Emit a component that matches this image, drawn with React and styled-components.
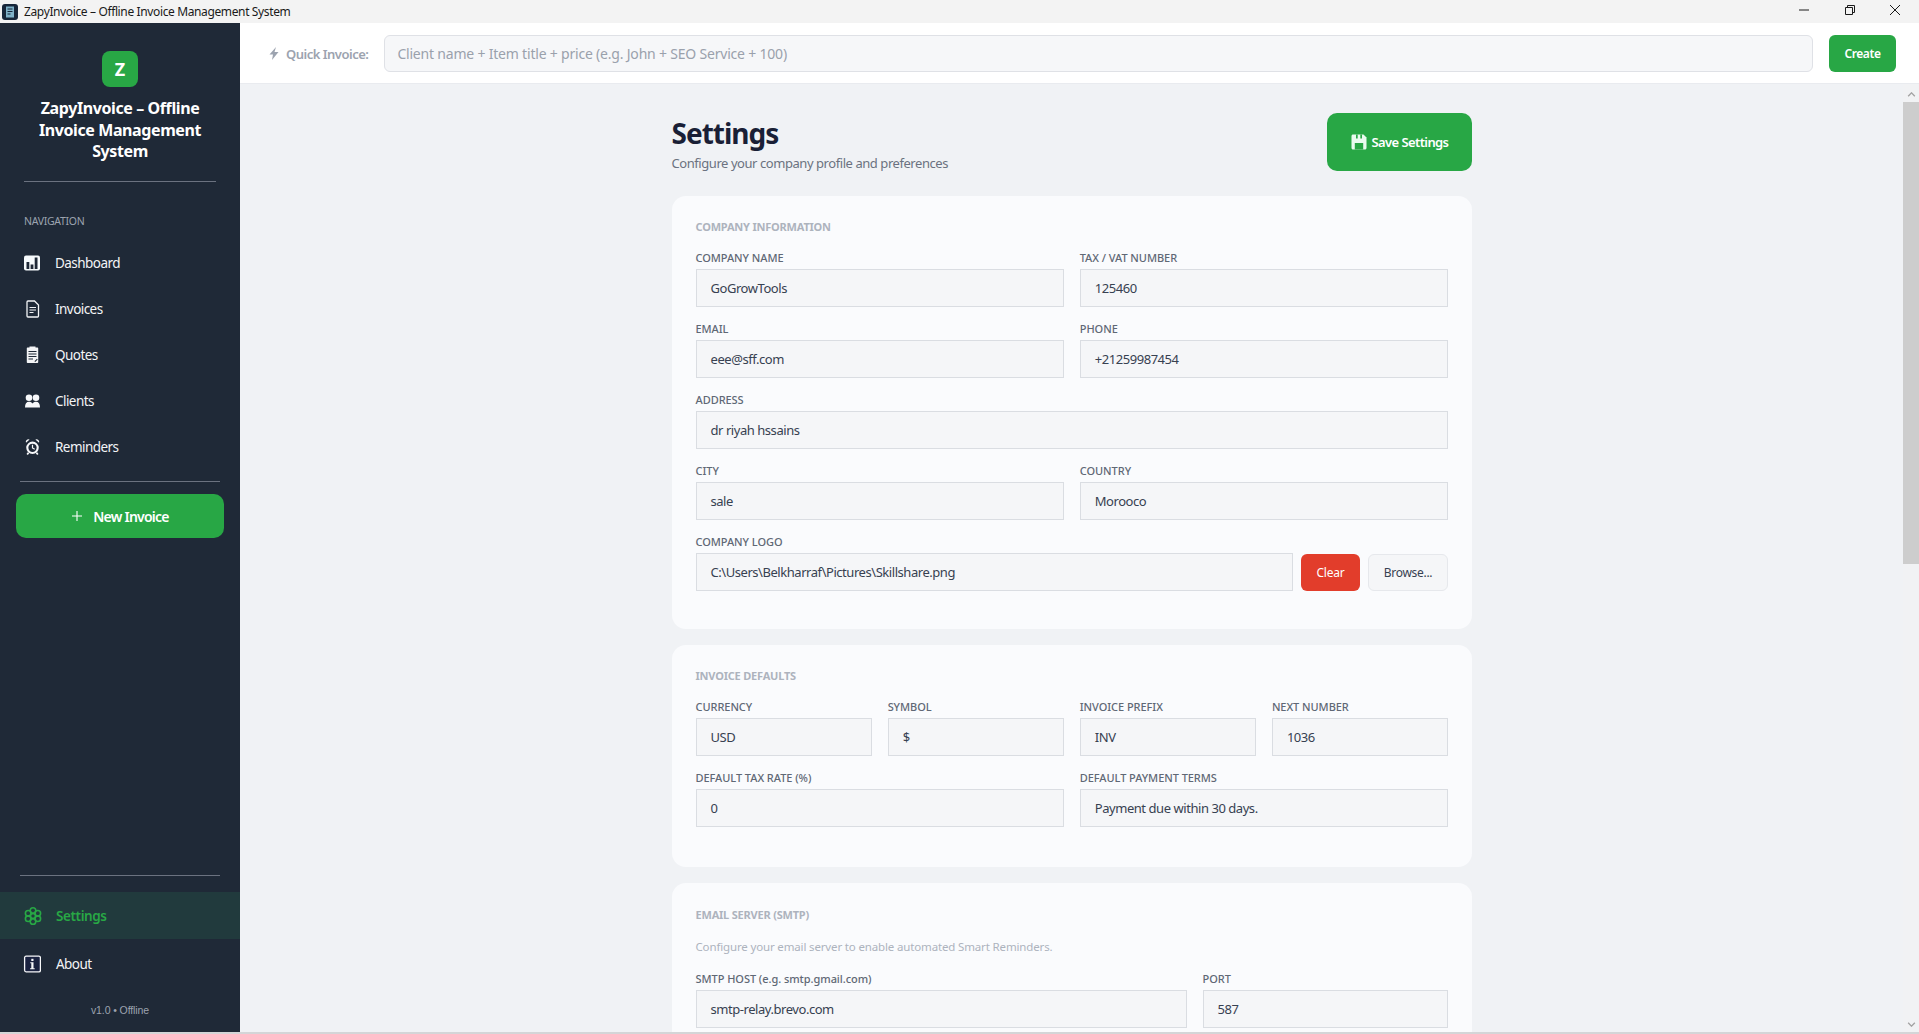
import React from "react";
import styled, { createGlobalStyle } from "styled-components";

const GlobalStyle = createGlobalStyle`
  html, body {
    margin: 0;
    padding: 0;
    height: 100%;
    overflow: hidden;
    background: #f0f2f5;
    font-family: "Noto Sans", "Open Sans", "Liberation Sans", sans-serif;
  }
  * { box-sizing: border-box; }
`;

const Win = styled.div`
  width: 1919px;
  height: 1034px;
  display: flex;
  flex-direction: column;
  overflow: hidden;
  border-bottom: 2px solid #d4d5d7;
`;

// window title bar
const TitleBar = styled.div`
  height: 23px;
  flex-shrink: 0;
  background: #f3f3f3;
  display: flex;
  align-items: center;
  padding-left: 2px;
  font-size: 12px;
  letter-spacing: -0.37px;
  color: #1a1a1a;
`;

const AppGlyph = styled.svg`
  width: 16px;
  height: 16px;
  margin-right: 6px;
  flex-shrink: 0;
`;

const WinControls = styled.div`
  margin-left: auto;
  display: flex;
  align-items: center;
  height: 100%;
  padding: 0 1px 3px 0;
`;

const WinBtn = styled.div`
  width: 45.5px;
  height: 100%;
  display: flex;
  align-items: center;
  justify-content: center;
  svg {
    width: 12px;
    height: 12px;
    stroke: #1a1a1a;
    fill: none;
    stroke-width: 1;
  }
`;

const Body = styled.div`
  flex: 1;
  display: flex;
  min-height: 0;
`;

const Sidebar = styled.aside`
  width: 240px;
  flex-shrink: 0;
  background: #1f2937;
  display: flex;
  flex-direction: column;
`;

const Brand = styled.div`
  display: flex;
  flex-direction: column;
  align-items: center;
  padding-top: 28px;
  margin: 0 24px;
  height: 159px;
  flex-shrink: 0;
  border-bottom: 1px solid #6b7280;
`;

const LogoMark = styled.div`
  width: 36px;
  height: 36px;
  flex-shrink: 0;
  border-radius: 8px;
  background: #28a745;
  color: #fff;
  display: flex;
  align-items: center;
  justify-content: center;
  font-size: 18px;
  font-weight: 700;
`;

const BrandName = styled.div`
  margin-top: 11px;
  width: 192px;
  text-align: center;
  color: #fff;
  font-size: 16px;
  font-weight: 700;
  line-height: 21.7px;
  letter-spacing: -0.4px;
`;

const NavCaption = styled.div`
  margin: 32px 0 0 24px;
  height: 15px;
  line-height: 15px;
  font-size: 10.5px;
  letter-spacing: -0.3px;
  color: #9ca3af;
`;

const NavList = styled.nav`
  margin-top: 11px;
  display: flex;
  flex-direction: column;
`;

const NavItem = styled.div`
  height: ${(p) => p.$h || 46}px;
  display: flex;
  align-items: center;
  gap: ${(p) => p.$gap || 14}px;
  padding-left: ${(p) => (p.$active ? 24 : 23)}px;
  font-size: 13.5px;
  font-weight: ${(p) => (p.$active ? 600 : 400)};
  letter-spacing: ${(p) => (p.$active ? "-0.4px" : "-0.55px")};
  color: ${(p) => (p.$active ? "#28a745" : "#f3f4f6")};
  background: ${(p) => (p.$active ? "#213a3d" : "transparent")};
  svg {
    width: 18px;
    height: 18px;
    flex-shrink: 0;
  }
`;

const SideRule = styled.div`
  margin: ${(p) => p.$m || "0"};
  height: 1px;
  flex-shrink: 0;
  background: #6b7280;
`;

const NewInvoice = styled.button`
  margin: 12px 16px 0;
  height: 44px;
  flex-shrink: 0;
  border: none;
  border-radius: 10px;
  background: #28a745;
  color: #fff;
  display: flex;
  align-items: center;
  justify-content: center;
  gap: 10px;
  font: 600 14px "Noto Sans", sans-serif;
  letter-spacing: -0.75px;
  svg {
    width: 12px;
    height: 12px;
  }
`;

const SideBottom = styled.div`
  margin-top: auto;
  display: flex;
  flex-direction: column;
`;

const Version = styled.div`
  height: 43px;
  line-height: 43px;
  text-align: center;
  font-size: 10.5px;
  letter-spacing: -0.1px;
  color: #9ca3af;
  font-family: "Liberation Sans", sans-serif;
`;

const Main = styled.main`
  flex: 1;
  min-width: 0;
  display: flex;
  flex-direction: column;
`;

const QuickBar = styled.div`
  height: 61px;
  flex-shrink: 0;
  background: #fff;
  border-bottom: 1px solid #e9ebef;
  display: flex;
  align-items: center;
  padding: 1px 23px 0 29px;
`;

const QuickLabel = styled.div`
  display: flex;
  align-items: center;
  gap: 7px;
  font-size: 13px;
  font-weight: 600;
  letter-spacing: -0.5px;
  color: #9ca3af;
  white-space: nowrap;
  svg {
    width: 10px;
    height: 13px;
    fill: #9ca3af;
  }
`;

const QuickInput = styled.div`
  flex: 1;
  height: 37px;
  margin: 0 16px;
  padding-left: 12px;
  display: flex;
  align-items: center;
  border: 1px solid #dfe1e6;
  border-radius: 6px;
  background: #f6f7f9;
  font-size: 14px;
  letter-spacing: -0.2px;
  color: #9aa1ac;
`;

const CreateBtn = styled.button`
  width: 67px;
  height: 37px;
  border: none;
  border-radius: 6px;
  background: #28a745;
  color: #fff;
  font: 600 12px "Noto Sans", sans-serif;
  letter-spacing: -0.4px;
`;

const ScrollRow = styled.div`
  flex: 1;
  min-height: 0;
  display: flex;
`;

const Content = styled.div`
  flex: 1;
  min-width: 0;
  overflow: hidden;
  padding: 29px 0 0 431.5px;
`;

const Column = styled.div`
  width: 800.5px;
  display: flex;
  flex-direction: column;
  gap: 16px;
`;

const PageHead = styled.div`
  height: 66px;
  flex-shrink: 0;
  margin-top: 1px;
  display: flex;
  justify-content: space-between;
`;

const PageTitle = styled.h1`
  margin: 0;
  font-size: 28px;
  line-height: 38px;
  font-weight: 700;
  letter-spacing: -1px;
  color: #1a1f36;
`;

const PageSub = styled.div`
  margin-top: 2px;
  font-size: 13px;
  letter-spacing: -0.44px;
  color: #6b7280;
`;

const SaveBtn = styled.button`
  width: 145px;
  height: 58px;
  margin-top: -1px;
  border: none;
  border-radius: 10px;
  background: #28a745;
  color: #fff;
  display: flex;
  align-items: center;
  justify-content: center;
  gap: 5px;
  font: 600 13px "Noto Sans", sans-serif;
  letter-spacing: -0.6px;
  svg {
    width: 16px;
    height: 16px;
  }
`;

const Card = styled.section`
  background: #fafbfd;
  border-radius: 14px;
  padding: ${(p) => p.$pt || 24}px 24px 24px;
  height: ${(p) => p.$h}px;
  flex-shrink: 0;
`;

const CardTitle = styled.div`
  height: 14px;
  line-height: 14px;
  font-size: 11px;
  font-weight: 700;
  letter-spacing: -0.2px;
  color: #adb3bd;
  text-transform: uppercase;
  margin-bottom: ${(p) => p.$mb || 16}px;
`;

const CardNote = styled.div`
  height: 16px;
  line-height: 16px;
  font-size: 11.5px;
  letter-spacing: -0.15px;
  color: #adb3bd;
  margin-bottom: 16px;
`;

const Rows = styled.div`
  display: flex;
  flex-direction: column;
  gap: 14px;
`;

const Row = styled.div`
  display: grid;
  grid-template-columns: ${(p) => p.$cols || "1fr 1fr"};
  gap: 16px;
`;

const Field = styled.div`
  min-width: 0;
  display: flex;
  flex-direction: column;
`;

const Label = styled.label`
  height: 15px;
  line-height: 15px;
  margin-bottom: 4px;
  font-size: 11px;
  font-weight: 500;
  letter-spacing: -0.05px;
  color: #5f6875;
`;

const Input = styled.div`
  height: 38px;
  padding-left: 14px;
  display: flex;
  align-items: center;
  background: #f5f6f8;
  border: 1px solid #dadde2;
  font-size: 13px;
  letter-spacing: -0.45px;
  color: #374151;
`;

const LogoRow = styled.div`
  display: flex;
  align-items: center;
  gap: 8px;
`;

const LogoInput = styled(Input)`
  flex: 1;
`;

const ClearBtn = styled.button`
  width: 59px;
  height: 37px;
  border: none;
  border-radius: 6px;
  background: #e23d2b;
  color: #fff;
  font: 400 12px "Noto Sans", sans-serif;
  letter-spacing: -0.2px;
`;

const BrowseBtn = styled.button`
  width: 80px;
  height: 37px;
  border: 1px solid #e6e8ec;
  border-radius: 6px;
  background: #f5f6f8;
  color: #374151;
  font: 400 12px "Noto Sans", sans-serif;
  letter-spacing: -0.3px;
`;

// scrollbar drawn as a strip next to the content
const ScrollStrip = styled.div`
  width: 16px;
  flex-shrink: 0;
  background: #f1f2f4;
  display: flex;
  flex-direction: column;
  align-items: center;
`;

const ScrollArrow = styled.svg`
  width: 9px;
  height: 5px;
  flex-shrink: 0;
  margin: ${(p) => p.$m};
  fill: none;
  stroke: #a3a3a3;
  stroke-width: 1.6;
`;

const ScrollThumb = styled.div`
  width: 16px;
  height: 462px;
  flex-shrink: 0;
  background: #cdcdcd;
`;

const ScrollRest = styled.div`
  flex: 1;
`;

const DashIcon = () => (
  <svg viewBox="0 0 18 18">
    <rect x="1" y="1.500" width="16" height="15" rx="2" fill="#f7fbfd" />
    <rect x="3.500" y="8" width="2.800" height="7" fill="#1f2937" />
    <rect x="7.600" y="10.500" width="2.800" height="4.500" fill="#1f2937" />
    <rect x="11.700" y="3.500" width="2.800" height="11.500" fill="#1f2937" />
  </svg>
);

const DocIcon = () => (
  <svg viewBox="0 0 18 18">
    <path d="M5 1h6.500l4 4v11c0 .6-.4 1-1 1H5c-.6 0-1-.4-1-1V2c0-.6.4-1 1-1z" fill="none" stroke="#f3f4f6" strokeWidth="1.300" />
    <path d="M6.500 7.500h6.500M6.500 10h6.500M6.500 12.500h4" stroke="#f3f4f6" strokeWidth="1.100" />
  </svg>
);

const QuoteIcon = () => (
  <svg viewBox="0 0 18 18">
    <path d="M4.500 1.500h2V.5h6v1h2c.4 0 .7.3.7.7v14.100c0 .4-.3.7-.7.7h-10c-.4 0-.7-.3-.7-.7V2.200c0-.4.3-.7.7-.7z" fill="#f3f4f6" />
    <path d="M5.500 5.500h8M5.500 8h8M5.500 10.500h8M5.500 13h4.500" stroke="#1f2937" strokeWidth="1.100" />
    <path d="M11.800 15.600l2.500-2.500" stroke="#1f2937" strokeWidth="1.100" />
  </svg>
);

const ClientsIcon = () => (
  <svg viewBox="0 0 18 18">
    <circle cx="6" cy="5.800" r="3.300" fill="#f7f8fa" />
    <circle cx="13" cy="5.800" r="3.300" fill="#f7f8fa" />
    <path d="M2 15.500c0-3.800 1.400-5.800 4-5.800 1.500 0 2.700.6 3.500 1.700.8-1.100 2-1.700 3.500-1.700 2.600 0 4 2 4 5.800z" fill="#f7f8fa" />
  </svg>
);

const AlarmIcon = () => (
  <svg viewBox="0 0 18 18">
    <circle cx="9.500" cy="9.800" r="5.200" fill="none" stroke="#f7f8fa" strokeWidth="2.100" />
    <path d="M9.500 6.800V10l2.200 1.300" fill="none" stroke="#f7f8fa" strokeWidth="1.200" />
    <path d="M3 4.800a2.600 2.600 0 0 1 3.600-3.300zM16 4.800a2.600 2.600 0 0 0-3.600-3.300z" fill="#f7f8fa" />
    <path d="M5.500 14.800l-1.300 1.800M13.500 14.800l1.300 1.800" stroke="#f7f8fa" strokeWidth="1.700" />
  </svg>
);

const GearIcon = () => (
  <svg viewBox="0 0 18 18" fill="none" stroke="#28a745" strokeWidth="1.600">
    <circle cx="9" cy="9" r="2.600" />
    <circle cx="9" cy="3.600" r="2.800" />
    <circle cx="9" cy="14.400" r="2.800" />
    <circle cx="13.800" cy="6.300" r="2.800" />
    <circle cx="13.800" cy="11.700" r="2.800" />
    <circle cx="4.200" cy="6.300" r="2.800" />
    <circle cx="4.200" cy="11.700" r="2.800" />
  </svg>
);

const InfoIcon = () => (
  <svg viewBox="0 0 18 18">
    <rect x="1.600" y="1.200" width="15.800" height="15.600" rx="1.500" fill="#1a2240" stroke="#f7f8fa" strokeWidth="1.300" />
    <rect x="8.300" y="3.800" width="2.200" height="2.200" fill="#f7f8fa" />
    <path d="M7.300 7.300h3.200v6h1.200v1H7.100v-1h1.200v-5h-1z" fill="#f7f8fa" />
  </svg>
);

const SaveIcon = () => (
  <svg viewBox="0 0 16 16">
    <path d="M2 .5h10.500l3 3V14c0 .8-.7 1.500-1.500 1.500H2C1.200 15.500.5 14.800.5 14V2C.5 1.200 1.200.5 2 .5z" fill="#eafbef" />
    <rect x="5" y=".5" width="1.700" height="4" fill="#28a745" />
    <rect x="9.300" y=".5" width="1.700" height="4" fill="#28a745" />
    <rect x="3.800" y="9" width="8.400" height="6.500" fill="#28a745" />
  </svg>
);

const App = () => {
  return (
    <>
      <GlobalStyle />
      <Win>
        <TitleBar>
          <AppGlyph viewBox="0 0 16 16">
            <rect width="16" height="16" rx="3" fill="#17263a" />
            <rect x="4" y="2.500" width="8" height="11" fill="#7fb2c9" />
            <path d="M5.500 5h5M5.500 7.500h5M5.500 10h3" stroke="#17263a" strokeWidth="1" />
          </AppGlyph>
          ZapyInvoice – Offline Invoice Management System
          <WinControls>
            <WinBtn>
              <svg viewBox="0 0 12 12"><path d="M1 6h10" /></svg>
            </WinBtn>
            <WinBtn>
              <svg viewBox="0 0 12 12"><path d="M1.500 3.500h7v7h-7zM3.500 3.500v-2h7v7h-2" /></svg>
            </WinBtn>
            <WinBtn>
              <svg viewBox="0 0 12 12"><path d="M1 1l10 10M11 1L1 11" /></svg>
            </WinBtn>
          </WinControls>
        </TitleBar>
        <Body>
          <Sidebar>
            <Brand>
              <LogoMark>Z</LogoMark>
              <BrandName>ZapyInvoice – Offline Invoice Management System</BrandName>
            </Brand>
            <NavCaption>NAVIGATION</NavCaption>
            <NavList>
              <NavItem><DashIcon />Dashboard</NavItem>
              <NavItem><DocIcon />Invoices</NavItem>
              <NavItem><QuoteIcon />Quotes</NavItem>
              <NavItem><ClientsIcon />Clients</NavItem>
              <NavItem><AlarmIcon />Reminders</NavItem>
            </NavList>
            <SideRule $m="11px 20px 0" />
            <NewInvoice>
              <svg viewBox="0 0 12 12"><path d="M6 1v10M1 6h10" stroke="#fff" strokeWidth="1.100" /></svg>
              New Invoice
            </NewInvoice>
            <SideBottom>
              <SideRule $m="0 20px 16px" />
              <NavItem $active $h={47} $gap={14}><GearIcon />Settings</NavItem>
              <NavItem $h={50} $gap={15}><InfoIcon />About</NavItem>
              <Version>v1.0 • Offline</Version>
            </SideBottom>
          </Sidebar>
          <Main>
            <QuickBar>
              <QuickLabel>
                <svg viewBox="0 0 10 13"><path d="M7 0L.5 7.500h3.500L3 13l6.500-8H5.500z" /></svg>
                Quick Invoice:
              </QuickLabel>
              <QuickInput>Client name + Item title + price (e.g. John + SEO Service + 100)</QuickInput>
              <CreateBtn>Create</CreateBtn>
            </QuickBar>
            <ScrollRow>
              <Content>
                <Column>
                  <PageHead>
                    <div>
                      <PageTitle>Settings</PageTitle>
                      <PageSub>Configure your company profile and preferences</PageSub>
                    </div>
                    <SaveBtn><SaveIcon />Save Settings</SaveBtn>
                  </PageHead>
                  <Card $h={433}>
                    <CardTitle>Company Information</CardTitle>
                    <Rows>
                      <Row>
                        <Field><Label>COMPANY NAME</Label><Input>GoGrowTools</Input></Field>
                        <Field><Label>TAX / VAT NUMBER</Label><Input>125460</Input></Field>
                      </Row>
                      <Row>
                        <Field><Label>EMAIL</Label><Input>eee@sff.com</Input></Field>
                        <Field><Label>PHONE</Label><Input>+21259987454</Input></Field>
                      </Row>
                      <Field><Label>ADDRESS</Label><Input>dr riyah hssains</Input></Field>
                      <Row>
                        <Field><Label>CITY</Label><Input>sale</Input></Field>
                        <Field><Label>COUNTRY</Label><Input>Morooco</Input></Field>
                      </Row>
                      <Field>
                        <Label>COMPANY LOGO</Label>
                        <LogoRow>
                          <LogoInput>C:\Users\Belkharraf\Pictures\Skillshare.png</LogoInput>
                          <ClearBtn>Clear</ClearBtn>
                          <BrowseBtn>Browse...</BrowseBtn>
                        </LogoRow>
                      </Field>
                    </Rows>
                  </Card>
                  <Card $h={222}>
                    <CardTitle>Invoice Defaults</CardTitle>
                    <Rows>
                      <Row $cols="1fr 1fr 1fr 1fr">
                        <Field><Label>CURRENCY</Label><Input>USD</Input></Field>
                        <Field><Label>SYMBOL</Label><Input>$</Input></Field>
                        <Field><Label>INVOICE PREFIX</Label><Input>INV</Input></Field>
                        <Field><Label>NEXT NUMBER</Label><Input>1036</Input></Field>
                      </Row>
                      <Row>
                        <Field><Label>DEFAULT TAX RATE (%)</Label><Input>0</Input></Field>
                        <Field><Label>DEFAULT PAYMENT TERMS</Label><Input>Payment due within 30 days.</Input></Field>
                      </Row>
                    </Rows>
                  </Card>
                  <Card $h={223} $pt={25}>
                    <CardTitle $mb={17}>Email Server (SMTP)</CardTitle>
                    <CardNote>Configure your email server to enable automated Smart Reminders.</CardNote>
                    <Row $cols="2fr 1fr">
                      <Field><Label>SMTP HOST (e.g. smtp.gmail.com)</Label><Input>smtp-relay.brevo.com</Input></Field>
                      <Field><Label>PORT</Label><Input>587</Input></Field>
                    </Row>
                  </Card>
                </Column>
              </Content>
              <ScrollStrip>
                <ScrollArrow viewBox="0 0 10 6" $m="8px 0 5px"><path d="M1 5l4-4 4 4" /></ScrollArrow>
                <ScrollThumb />
                <ScrollRest />
                <ScrollArrow viewBox="0 0 10 6" $m="0 0 5px"><path d="M1 1l4 4 4-4" /></ScrollArrow>
              </ScrollStrip>
            </ScrollRow>
          </Main>
        </Body>
      </Win>
    </>
  );
};

export default App;
